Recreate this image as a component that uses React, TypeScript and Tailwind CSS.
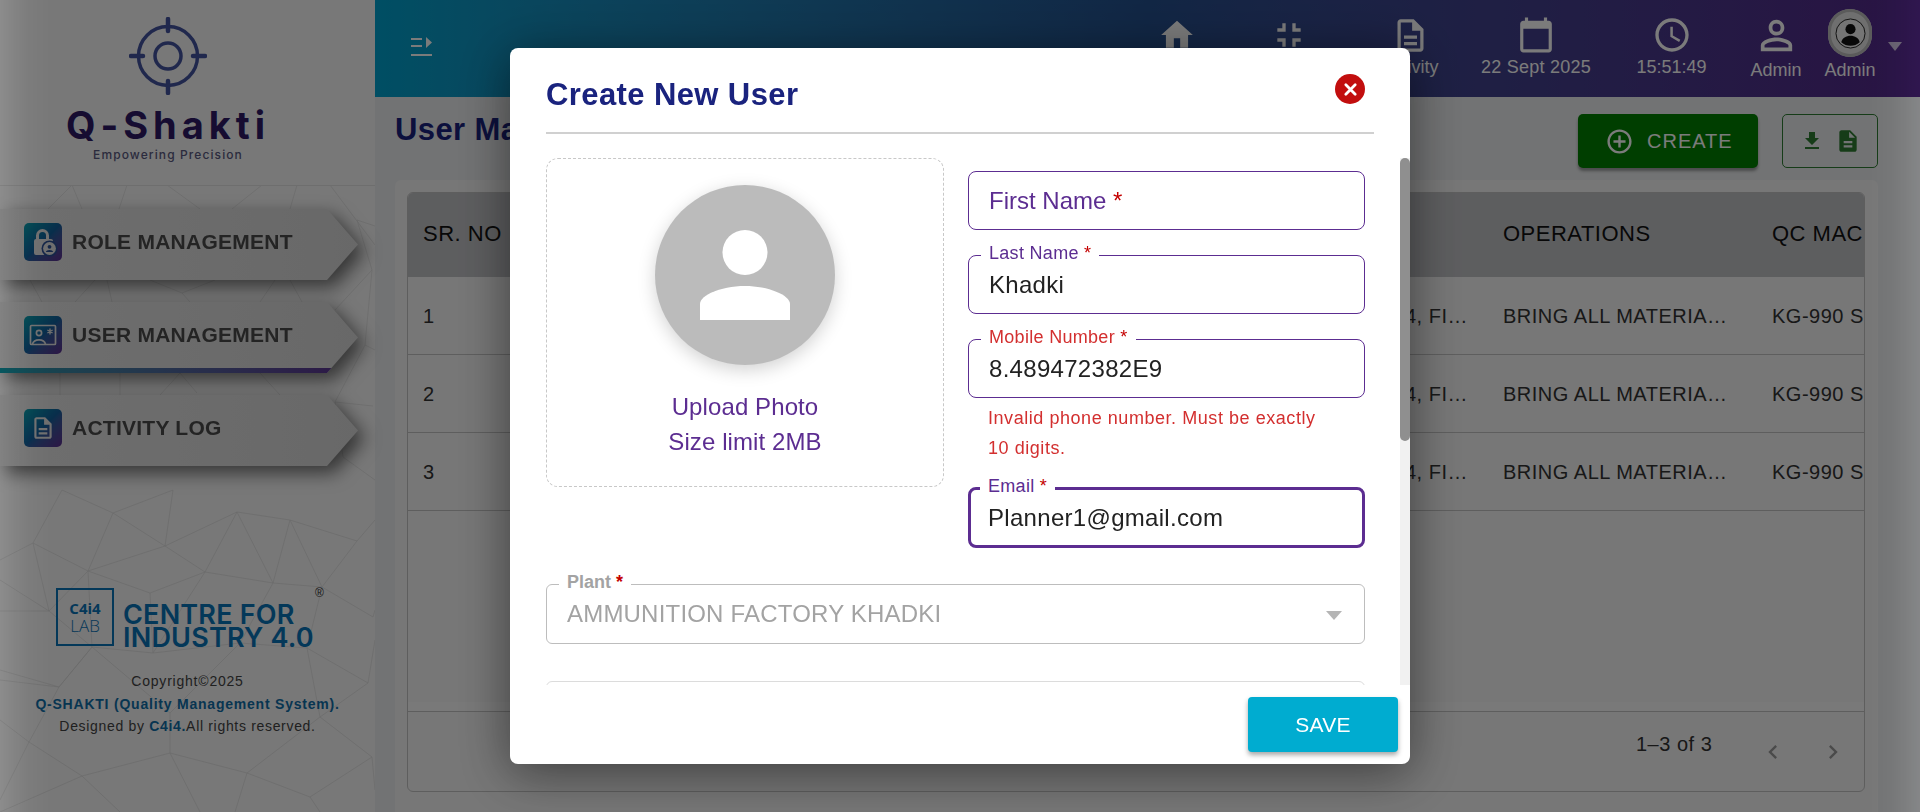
import type { ReactNode } from "react";

const ICONS = {
  home: "M10 20v-6h4v6h5v-8h3L12 3 2 12h3v8z",
  shrink: "M5 16h3v3h2v-5H5v2zm3-8H5v2h5V5H8v3zm6 11h2v-3h3v-2h-5v5zm2-11V5h-2v5h5V8h-3z",
  doc: "M8 16h8v2H8zm0-4h8v2H8zm6-10H6c-1.1 0-2 .9-2 2v16c0 1.1.89 2 1.99 2H18c1.1 0 2-.9 2-2V8l-6-6zm4 18H6V4h7v5h5v11z",
  calendar: "M20 3h-1V1h-2v2H7V1H5v2H4c-1.1 0-2 .9-2 2v16c0 1.1.9 2 2 2h16c1.1 0 2-.9 2-2V5c0-1.1-.9-2-2-2zm0 18H4V8h16v13z",
  clock: "M11.99 2C6.47 2 2 6.48 2 12s4.47 10 9.99 10C17.52 22 22 17.52 22 12S17.52 2 11.99 2zM12 20c-4.42 0-8-3.58-8-8s3.58-8 8-8 8 3.58 8 8-3.58 8-8 8zm.5-13H11v6l5.25 3.15.75-1.23-4.5-2.67z",
  person: "M12 5.9a2.1 2.1 0 1 1 0 4.2 2.1 2.1 0 0 1 0-4.2m0 9c2.97 0 6.1 1.46 6.1 2.1v1.1H5.9V17c0-.64 3.13-2.1 6.1-2.1M12 4C9.79 4 8 5.79 8 8s1.79 4 4 4 4-1.79 4-4-1.79-4-4-4zm0 9c-2.67 0-8 1.34-8 4v3h16v-3c0-2.66-5.33-4-8-4z",
  add: "M13 7h-2v4H7v2h4v4h2v-4h4v-2h-4V7zm-1-5C6.48 2 2 6.48 2 12s4.48 10 10 10 10-4.48 10-10S17.52 2 12 2zm0 18c-4.41 0-8-3.59-8-8s3.59-8 8-8 8 3.59 8 8-3.58 8-8 8z",
  download: "M5 20h14v-2H5v2zM19 9h-4V3H9v6H5l7 7 7-7z",
  file: "M14 2H6c-1.1 0-1.99.9-1.99 2L4 20c0 1.1.89 2 1.99 2H18c1.1 0 2-.9 2-2V8l-6-6zm2 16H8v-2h8v2zm0-4H8v-2h8v2zm-3-5V3.5L18.5 9H13z",
  chevronLeft: "M15.41 7.41 14 6l-6 6 6 6 1.41-1.41L10.83 12z",
  chevronRight: "M10 6 8.59 7.41 13.17 12l-4.58 4.59L10 18l6-6z",
};

// low poly background behind the sidebar menu
const MESH: [number, number, number, number][] = [
  [72, 185, 48, 209], [72, 185, 82, 209], [127, 185, 119, 209], [167, 185, 200, 209], [262, 185, 232, 209],
  [297, 185, 290, 209], [330, 185, 375, 245], [357, 220, 375, 226], [357, 220, 372, 270], [372, 270, 335, 310],
  [372, 270, 365, 345], [365, 345, 335, 402], [365, 345, 375, 350], [335, 402, 373, 406], [335, 402, 343, 457],
  [343, 457, 375, 480], [30, 280, 42, 302], [95, 280, 75, 302], [107, 280, 112, 302], [150, 280, 182, 293],
  [182, 293, 215, 280], [182, 293, 190, 302], [275, 280, 260, 302], [290, 280, 302, 302], [60, 373, 0, 355],
  [60, 373, 60, 395], [120, 373, 120, 395], [180, 373, 197, 393], [180, 373, 160, 395], [260, 373, 280, 395],
  [62, 490, 33, 543], [62, 490, 113, 513], [173, 490, 113, 513], [173, 490, 165, 546], [113, 513, 88, 571],
  [113, 513, 165, 546], [33, 543, 88, 571], [33, 543, 0, 560], [33, 543, 49, 611], [88, 571, 165, 546],
  [88, 571, 49, 611], [88, 571, 92, 647], [165, 546, 237, 512], [165, 546, 205, 572], [237, 512, 290, 520],
  [237, 512, 205, 572], [237, 512, 273, 583], [290, 520, 357, 541], [290, 520, 273, 583], [290, 520, 322, 587],
  [357, 541, 322, 587], [357, 541, 375, 520], [205, 572, 273, 583], [205, 572, 150, 593], [205, 572, 153, 653],
  [273, 583, 322, 587], [273, 583, 240, 643], [322, 587, 373, 617], [322, 587, 307, 648], [49, 611, 92, 647],
  [49, 611, 0, 580], [49, 611, 0, 611], [150, 593, 88, 571], [150, 593, 153, 653], [92, 647, 59, 687],
  [92, 647, 153, 653], [153, 653, 240, 643], [240, 643, 307, 648], [307, 648, 368, 683], [307, 648, 320, 717],
  [59, 687, 0, 680], [59, 687, 29, 742], [59, 687, 0, 670], [59, 687, 92, 647], [29, 742, 0, 720], [29, 742, 82, 776],
  [29, 742, 0, 800], [82, 776, 170, 753], [82, 776, 0, 812], [82, 776, 120, 812], [170, 753, 247, 773],
  [170, 753, 200, 812], [170, 713, 170, 753], [170, 713, 92, 647], [170, 713, 240, 643], [247, 773, 310, 797],
  [247, 773, 320, 717], [247, 773, 235, 812], [310, 797, 372, 757], [310, 797, 320, 812], [320, 717, 372, 757],
  [320, 717, 368, 683], [368, 683, 375, 640], [372, 757, 375, 790], [373, 617, 375, 610],
];

const ROWS = ["1", "2", "3"];

function Icon({ d, className }: { d: string; className?: string }) {
  return (
    <svg viewBox="0 0 24 24" fill="currentColor" className={className}>
      <path d={d} />
    </svg>
  );
}

function HeaderItem({
  icon,
  iconClass,
  label,
  className,
}: {
  icon: string;
  iconClass: string;
  label?: string;
  className: string;
}) {
  return (
    <div className={`flex flex-col items-center pt-[11px] ${className}`}>
      <div className="flex h-[48px] items-center justify-center">
        <Icon d={icon} className={`shrink-0 ${iconClass}`} />
      </div>
      {label && <span className="-mt-[4px] whitespace-nowrap text-[18px] leading-[24px]">{label}</span>}
    </div>
  );
}

function NavItem({ icon, label, active }: { icon: ReactNode; label: string; active?: boolean }) {
  return (
    <div className="[filter:drop-shadow(7px_7px_9px_rgba(0,0,0,0.55))]">
      <div className="relative flex h-[71px] w-[358px] items-center bg-linear-to-r from-[#e6e6e6] to-[#d8d8d8] pb-[5px] pl-[24px] [clip-path:polygon(0_0,327px_0,358px_50%,327px_100%,0_100%)]">
        <div className="flex size-[38px] items-center justify-center rounded-[5px] bg-linear-to-br from-[#0a9aa8] via-[#125f9c] to-[#5c2d91]">
          {icon}
        </div>
        <span className="ml-[10px] text-[21px] font-bold tracking-[0.25px] text-[#4c4c4c]">{label}</span>
        {active && (
          <div className="absolute inset-x-0 bottom-0 h-[5px] bg-linear-to-r from-[#0a9aa8] to-[#5c2d91]" />
        )}
      </div>
    </div>
  );
}

function Sidebar() {
  return (
    <aside className="relative flex h-full w-[375px] shrink-0 flex-col bg-[#f8f8f8]">
      <svg viewBox="0 0 375 812" className="absolute inset-0 h-full w-full" stroke="#dadada" strokeWidth="0.6">
        {MESH.map(([x1, y1, x2, y2], i) => (
          <line key={i} x1={x1} y1={y1} x2={x2} y2={y2} />
        ))}
      </svg>

      <div className="relative flex h-[186px] shrink-0 flex-col items-center border-b border-[#e4e4e4] bg-[#f8f8f8] pr-[39px]">
        <svg viewBox="0 0 78 78" className="mt-[17px] size-[78px]" fill="none" stroke="#44549f" strokeLinecap="round">
          <circle cx="39" cy="39" r="29.5" strokeWidth="3.5" />
          <circle cx="39" cy="39" r="13" strokeWidth="3.5" />
          <path d="M39 2v12M39 64v12M2 39h12M64 39h12" strokeWidth="4.5" />
        </svg>
        <div className="mt-[8px] font-['Inter',sans-serif] text-[38px] leading-[44px] font-bold tracking-[5px] whitespace-nowrap text-[#2e1a66]">
          Q-Shakti
        </div>
        <div className="font-['Inter',sans-serif] text-[12px] leading-[16px] font-medium tracking-[1.1px] text-[#5a5a80]">
          Empowering Precision
        </div>
      </div>

      <nav className="relative mt-[23px] flex flex-col gap-[22px]">
        <NavItem
          label="ROLE MANAGEMENT"
          icon={
            <svg viewBox="0 0 38 38" className="size-[38px]" fill="#e4e4e4">
              <path d="M12 16v-3.5a6.5 6.5 0 0 1 13 0V16h2a2 2 0 0 1 2 2v12a2 2 0 0 1-2 2H12a2 2 0 0 1-2-2V18a2 2 0 0 1 2-2zm3 0h7v-3.5a3.5 3.5 0 0 0-7 0z" />
              <circle cx="25.5" cy="25.5" r="8" fill="#2b4f95" />
              <circle cx="25.5" cy="25.5" r="6.4" />
              <circle cx="25.5" cy="23.8" r="1.9" fill="#2b4f95" />
              <path d="M21.8 29c.4-2.8 7-2.8 7.4 0z" fill="#2b4f95" />
            </svg>
          }
        />
        <NavItem
          active
          label="USER MANAGEMENT"
          icon={
            <svg viewBox="0 0 38 38" className="size-[38px]" fill="none" stroke="#e4e4e4" strokeWidth="1.7">
              <rect x="6.5" y="9.5" width="25" height="19" rx="1" />
              <circle cx="15" cy="17" r="2.6" />
              <path d="M8.5 28c1.5-5.5 11.5-5.5 13 0" />
              <path d="M26 12.5v6M23.4 14l5.2 3M28.6 14l-5.2 3" strokeWidth="1.4" />
            </svg>
          }
        />
        <NavItem
          label="ACTIVITY LOG"
          icon={<Icon d={ICONS.doc} className="size-[26px] text-[#e4e4e4]" />}
        />
      </nav>

      <div className="relative mt-[122px] flex flex-col items-center">
        <div className="relative flex items-end self-start pl-[56px] text-[#0a74b8]">
          <div className="flex size-[58px] flex-col items-center justify-center border-2 border-[#0a74b8] leading-none">
            <span className="font-['Open_Sans',sans-serif] text-[15px] font-bold">C4i4</span>
            <span className="mt-[1px] font-['Open_Sans',sans-serif] text-[17px] font-light">LAB</span>
          </div>
          <div className="ml-[9px] -mb-[3px] font-['Inter',sans-serif] text-[27px] leading-[23px] font-semibold tracking-[0.2px] whitespace-nowrap">
            <div>CENTRE FOR</div>
            <div>INDUSTRY 4.0</div>
          </div>
          <span className="absolute top-[-4px] right-[-10px] text-[12px] text-[#333]">®</span>
        </div>
        <div className="mt-[24px] text-center text-[14px] leading-[22.5px] tracking-[0.78px] text-[#444]">
          <div>Copyright©2025</div>
          <div className="font-bold text-[#0f6ea8]">Q-SHAKTI (Quality Management System).</div>
          <div className="tracking-[0.68px]">
            Designed by <span className="font-bold text-[#0f6ea8]">C4i4.</span>All rights reserved.
          </div>
        </div>
      </div>
    </aside>
  );
}

function Header() {
  return (
    <header className="flex h-[97px] shrink-0 items-start bg-linear-to-r from-[#00a3cf] via-[#24508e] to-[#55288c] pl-[36px] text-white">
      <svg viewBox="0 0 22 20" className="mt-[37px] h-[20px] w-[22px]" fill="currentColor">
        <path d="M0 1h11v2H0zM0 8h11v2H0zM0 17h21v2H0zM15 0l6 5.5-6 5.5z" />
      </svg>
      <div className="ml-auto flex items-start pr-[18px]">
        <HeaderItem icon={ICONS.home} iconClass="size-[38px]" className="w-[38px]" />
        <HeaderItem icon={ICONS.shrink} iconClass="size-[40px]" className="ml-[73px] w-[40px]" />
        <HeaderItem icon={ICONS.doc} iconClass="size-[39px]" label="Activity" className="ml-[71px] w-[60px]" />
        <HeaderItem icon={ICONS.calendar} iconClass="size-[38px]" label="22 Sept 2025" className="ml-[41px] w-[110px] tracking-[0.25px]" />
        <HeaderItem icon={ICONS.clock} iconClass="size-[40px]" label="15:51:49" className="ml-[45px] w-[71px]" />
        <HeaderItem
          icon={ICONS.person}
          iconClass="size-[47px]"
          label="Admin"
          className="ml-[43px] w-[52px] [&>span]:-mt-[1px]"
        />
        <div className="ml-[22px] flex w-[52px] flex-col items-center pt-[9px]">
          <div className="flex h-[48px] w-[44px] items-center justify-center rounded-full bg-[#e6e6e6] shadow-[inset_0_0_0_3px_#bcbcbc]">
            <svg viewBox="0 0 32 32" className="size-[31px]">
              <circle cx="16" cy="16" r="15" fill="#f2f2f2" stroke="#222" strokeWidth="1" />
              <circle cx="16" cy="11.5" r="5.2" fill="#111" />
              <path d="M6.5 25c1.5-9 17.5-9 19 0a14 14 0 0 1-19 0z" fill="#111" />
            </svg>
          </div>
          <span className="mt-[1px] text-[18px] leading-[24px]">Admin</span>
        </div>
        <div className="mt-[42px] ml-[12px] size-0 border-x-[7px] border-t-[9px] border-x-transparent border-t-white/70" />
      </div>
    </header>
  );
}

function TableRow({ index }: { index: string }) {
  return (
    <div className="flex h-[78px] shrink-0 items-center border-b border-[#c4c4c4] pt-[1px] pl-[15px] text-[20px] tracking-[0.5px] whitespace-nowrap text-[#333]">
      <div className="w-[982px] shrink-0">{index}</div>
      <div className="w-[98px] shrink-0">4, FI…</div>
      <div className="w-[269px] shrink-0">BRING ALL MATERIA…</div>
      <div className="shrink-0">KG-990 SEMI</div>
    </div>
  );
}

function Content() {
  return (
    <main className="flex min-h-0 flex-1 flex-col bg-[#eceef0] pr-[42px] pl-[20px]">
      <div className="flex h-[83px] shrink-0 items-start justify-between">
        <h1 className="mt-[16px] text-[31px] leading-[34px] font-bold tracking-[0.4px] text-[#1a237e]">User Management</h1>
        <div className="mt-[17px] flex gap-[24px]">
          <button className="flex h-[54px] w-[180px] items-center rounded-[5px] bg-[#008000] pl-[27px] text-[20px] tracking-[1px] text-white shadow-[0_3px_3px_rgba(0,0,0,0.35)]">
            <Icon d={ICONS.add} className="size-[29px]" />
            <span className="ml-[13px]">CREATE</span>
          </button>
          <button className="flex h-[54px] w-[96px] items-center justify-center gap-[11px] rounded-[5px] border border-[#2e7d32] text-[#2e7d32]">
            <Icon d={ICONS.download} className="size-[24px]" />
            <Icon d={ICONS.file} className="size-[26px]" />
          </button>
        </div>
      </div>
      <div className="h-[640px] shrink-0 rounded-t-[6px] bg-[#f6f6f6] pt-[12px] pr-[13px] pl-[12px]">
        <div className="flex h-[600px] flex-col overflow-hidden rounded-[6px] border border-[#c4c4c4]">
          <div className="flex h-[84px] shrink-0 items-center bg-[#c2c3c6] pb-[4px] pl-[15px] text-[22px] tracking-[0.5px] whitespace-nowrap text-[#111]">
            <div className="w-[982px] shrink-0">SR. NO</div>
            <div className="w-[98px] shrink-0" />
            <div className="w-[269px] shrink-0">OPERATIONS</div>
            <div className="shrink-0">QC MACHINE</div>
          </div>
          {ROWS.map((r) => (
            <TableRow key={r} index={r} />
          ))}
          <div className="flex-1" />
          <div className="h-[9px] shrink-0 bg-[#fbfbfb]" />
          <div className="flex h-[80px] shrink-0 items-start border-t border-[#c4c4c4] text-[20px] tracking-[0.5px] text-[#333]">
            <span className="mt-[17px] ml-[1228px]">1–3 of 3</span>
            <Icon d={ICONS.chevronLeft} className="mt-[26px] ml-[47px] size-[28px] text-[#9a9a9a]" />
            <Icon d={ICONS.chevronRight} className="mt-[26px] ml-[32px] size-[28px] text-[#9a9a9a]" />
          </div>
        </div>
      </div>
    </main>
  );
}

function Field({
  label,
  value,
  error,
  focused,
  className,
}: {
  label: string;
  value?: string;
  error?: boolean;
  focused?: boolean;
  className?: string;
}) {
  return (
    <div
      className={`relative flex items-center rounded-[8px] border-[#5c2d91] text-[24px] tracking-[0.3px] text-[#222] ${
        focused ? "h-[61px] border-[3px] px-[17px]" : "h-[59px] border px-[20px]"
      } ${className ?? ""}`}
    >
      {value ? (
        <>
          <span
            className={`absolute bg-white px-[8px] text-[18px] leading-[20px] ${
              focused ? "top-[-14px] left-[9px]" : "top-[-13px] left-[12px]"
            } ${error ? "text-[#d32f2f]" : "text-[#5c2d91]"}`}
          >
            {label} <span className="text-[#c40000]">*</span>
          </span>
          {value}
        </>
      ) : (
        <span className="tracking-normal text-[#5c2d91]">
          {label} <span className="text-[#c40000]">*</span>
        </span>
      )}
    </div>
  );
}

function CreateUserModal() {
  return (
    <div className="fixed inset-0 bg-black/40">
      <div className="absolute top-[48px] left-[510px] flex h-[716px] w-[900px] flex-col overflow-hidden rounded-[8px] bg-white shadow-[0_0_40px_500px_rgba(0,0,0,0.2),0_8px_50px_rgba(0,0,0,0.5)]">
        <div className="mx-[36px] flex h-[86px] shrink-0 items-center justify-between border-b-2 border-[#d0d0d0] pt-[6px] pr-[9px]">
          <h2 className="mt-[3px] text-[31px] leading-[36px] font-bold tracking-[0.4px] text-[#1a237e]">Create New User</h2>
          <button className="mb-[8px] flex size-[30px] items-center justify-center rounded-full bg-[#c20e0e] text-white">
            <svg viewBox="0 0 16 16" className="size-[15px]" stroke="currentColor" strokeWidth="3" strokeLinecap="round">
              <path d="M3 3l10 10M13 3L3 13" />
            </svg>
          </button>
        </div>

        <div className="relative h-[551px] shrink-0 overflow-hidden pt-[24px] pl-[36px]">
          <div className="flex gap-[24px]">
            <div className="flex h-[329px] w-[398px] shrink-0 flex-col items-center rounded-[12px] border border-dashed border-[#c8c8c8] pt-[26px]">
              <div className="flex size-[180px] items-center justify-center rounded-full bg-[#bbbbbb] shadow-[0_5px_18px_rgba(0,0,0,0.18)]">
                <svg viewBox="0 0 90 90" className="size-[90px]" fill="#fff">
                  <circle cx="45" cy="22.5" r="22.5" />
                  <path d="M0 90V74c0-9 22-18 45-18s45 9 45 18v16z" />
                </svg>
              </div>
              <div className="mt-[24px] text-center text-[24px] leading-[35px] tracking-[0.1px] text-[#5c2d91]">
                <div>Upload Photo</div>
                <div>Size limit 2MB</div>
              </div>
            </div>
            <div className="flex w-[397px] shrink-0 flex-col pt-[13px]">
              <Field label="First Name" />
              <Field label="Last Name" value="Khadki" className="mt-[25px]" />
              <Field label="Mobile Number" value="8.489472382E9" error className="mt-[25px]" />
              <p className="mt-[5px] h-[60px] pr-[30px] pl-[20px] text-[18px] leading-[30px] tracking-[0.55px] text-[#d32f2f]">
                Invalid phone number. Must be exactly 10 digits.
              </p>
              <Field label="Email" value="Planner1@gmail.com" focused className="mt-[24px]" />
            </div>
          </div>

          <div className="relative mt-[36px] flex h-[60px] w-[819px] items-center rounded-[6px] border border-[#bdbdbd] px-[20px] text-[24px] tracking-[0.2px] text-[#a3a3a3]">
            <span className="absolute top-[-13px] left-[12px] bg-white px-[8px] text-[18px] leading-[20px] font-bold tracking-normal">
              Plant <span className="text-[#c40000]">*</span>
            </span>
            AMMUNITION FACTORY KHADKI
            <div className="absolute top-[26px] right-[22px] size-0 border-x-[8px] border-t-[9px] border-x-transparent border-t-[#b5b5b5]" />
          </div>
          <div className="mt-[37px] h-[59px] w-[819px] rounded-[6px] border border-[#dcdcdc]" />

          <div className="absolute top-[24px] right-0 bottom-0 w-[10px] bg-[#f1f1f1]">
            <div className="h-[283px] rounded-[5px] bg-[#8f8f8f]" />
          </div>
        </div>

        <div className="flex flex-1 items-start justify-end pt-[12px] pr-[12px]">
          <button className="h-[55px] w-[150px] rounded-[4px] bg-[#00acd0] text-[21px] tracking-[0.3px] text-white shadow-[0_3px_5px_rgba(0,0,0,0.35)]">
            SAVE
          </button>
        </div>
      </div>
    </div>
  );
}

export default function App() {
  return (
    <div className="relative flex h-[812px] w-[1920px] overflow-hidden font-['Liberation_Sans',Arial,sans-serif]">
      <Sidebar />
      <div className="flex min-w-0 flex-1 flex-col">
        <Header />
        <Content />
      </div>
      <CreateUserModal />
    </div>
  );
}
